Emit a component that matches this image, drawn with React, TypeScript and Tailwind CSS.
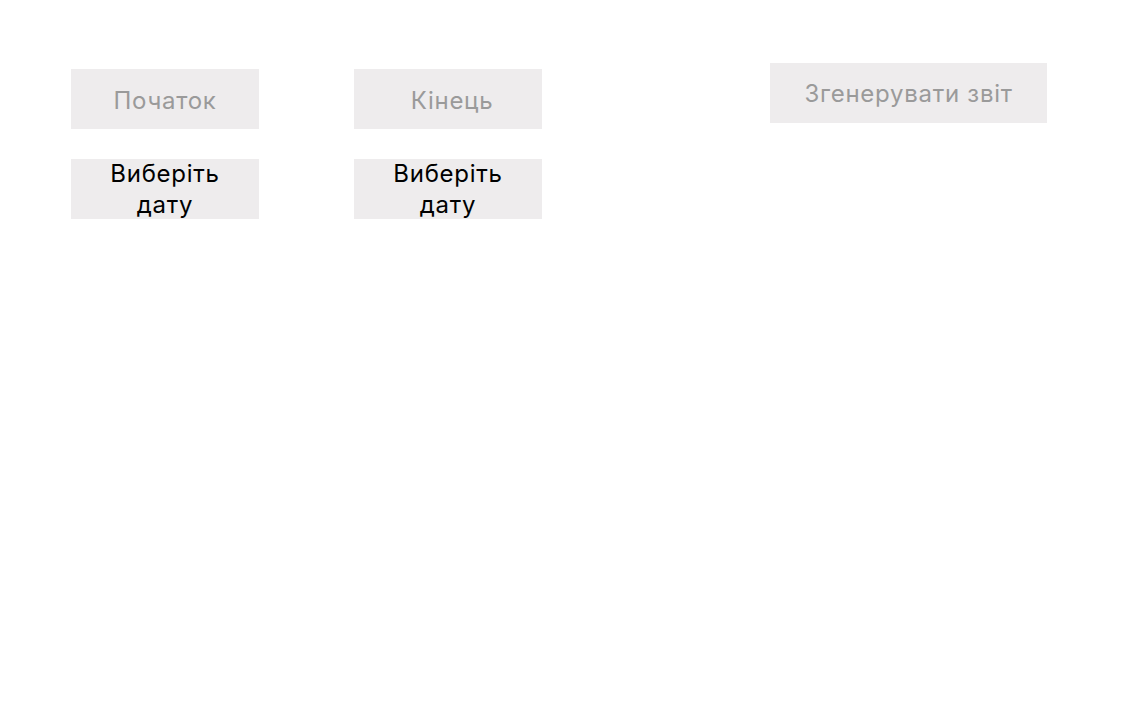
export default function App() {
  return (
    <div className="min-h-[716px] w-full bg-white font-['Inter','Noto_Sans',sans-serif]">
      <div className="flex items-start pl-[71px] pt-[63px]">
        <div className="mt-[6px] flex flex-col gap-[30px]">
          <div className="flex h-[60px] w-[188px] items-center justify-center bg-[#eeeced] pt-1 text-[24px] tracking-[0.03em] text-[#9a9a9a]">
            Початок
          </div>
          <button className="flex h-[60px] w-[188px] items-center justify-center overflow-hidden bg-[#eeeced] px-4 text-center text-[24px] leading-[31px] tracking-[0.03em] text-black">
            Виберіть дату
          </button>
        </div>
        <div className="ml-[95px] mt-[6px] flex flex-col gap-[30px]">
          <div className="flex h-[60px] w-[188px] items-center justify-center bg-[#eeeced] pl-2 pt-1 text-[24px] tracking-[0.03em] text-[#9a9a9a]">
            Кінець
          </div>
          <button className="flex h-[60px] w-[188px] items-center justify-center overflow-hidden bg-[#eeeced] px-4 text-center text-[24px] leading-[31px] tracking-[0.03em] text-black">
            Виберіть дату
          </button>
        </div>
        <button className="ml-[228px] flex h-[60px] w-[277px] items-center justify-center bg-[#eeeced] pt-[2px] text-[24px] tracking-[0.03em] text-[#9a9a9a]">
          Згенерувати звіт
        </button>
      </div>
    </div>
  );
}
